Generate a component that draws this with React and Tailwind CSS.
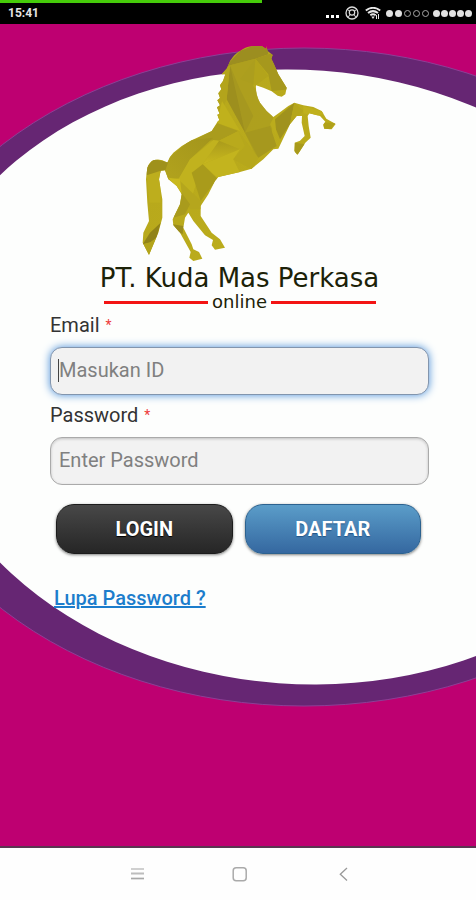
import React from "react";

function Backdrop() {
  return (
    <svg
      className="absolute inset-0 h-full w-full"
      viewBox="0 0 476 822"
      preserveAspectRatio="none"
      aria-hidden="true"
    >
      <ellipse cx="304" cy="353" rx="426" ry="329" fill="#662673" stroke="#8d3f96" strokeWidth="1" />
      <ellipse cx="301" cy="353" rx="388" ry="307" fill="#fdfefd" transform="rotate(4.2 301 353)" />
    </svg>
  );
}

const HORSE =
  "M408 30L413 45L428 57L424 68L432 85L445 115L470 155L466 175L455 182L443 179L425 166L400 155L378 148Q376 175 390 200Q408 226 430 243L455 225L475 210L493 200L520 208L550 213L575 225L589 248L617 264L605 280L583 278L579 266L586 257L570 240L538 232L533 240L536 270L542 305L526 320L510 345L502 357L493 345L494 320L510 314L524 300L515 260L516 240L500 240L480 265L445 338L430 340L400 370L365 398L330 408L265 423L255 435L235 475L212 510L212 540L245 590L270 610L285 635L255 641L245 628L249 612L225 598L190 555L175 530L165 545L160 575L185 625L190 640L207 648L217 668L190 675L178 665L182 648L175 635L150 590L130 568L128 550L150 505L155 475L140 450L115 430L105 403L92 404L87 430L97 490L97 545L85 590L57 657L38 620L40 590L57 555L52 500L48 430L52 395Q58 378 70 373Q90 366 112 380Q118 362 130 350Q155 328 185 313L245 285L262 258L268 252L262 236L269 234L261 214L270 208L262 193L270 186L265 172L274 160L270 148L279 135L286 115L275 115L291 97L300 75Q315 52 330 45Q345 33 365 31L395 30L409 39Z";

function Horse() {
  return (
    <svg className="h-[230px] w-[220px]" viewBox="0 0 660 690" role="img" aria-label="PT. Kuda Mas Perkasa">
      <defs>
        <clipPath id="horse">
          <path d={HORSE} />
        </clipPath>
        <linearGradient id="gold" x1="0" y1="0" x2="1" y2="1">
          <stop offset="0" stopColor="#b5a61c" />
          <stop offset="1" stopColor="#bdae1b" />
        </linearGradient>
        <linearGradient id="flank" x1="0" y1="1" x2="1" y2="0">
          <stop offset="0" stopColor="#b2a31d" />
          <stop offset="1" stopColor="#a3951c" />
        </linearGradient>
        <linearGradient id="belly" x1="0" y1="0" x2="0" y2="1">
          <stop offset="0" stopColor="#aa9b1b" />
          <stop offset="1" stopColor="#c8b81e" />
        </linearGradient>
      </defs>
      <path d={HORSE} fill="url(#gold)" />
      <g clipPath="url(#horse)">
        <path d="M260 120L330 45L380 25L410 25L415 55L376 68L300 88Z" fill="#9c8e20" />
        <path d="M376 68L430 50L480 160L425 165L415 115Z" fill="#a6981d" />
        <path d="M376 68L415 120L378 148L330 130Z" fill="#b3a41b" />
        <path d="M300 88L290 190L345 290L370 240L330 160Z" fill="#9d8f1e" />
        <path d="M300 88L260 110V260L290 190Z" fill="#b3a41b" />
        <path d="M276 195L260 260L330 285Z" fill="#c0b11c" />
        <path d="M300 88L345 290L380 365L420 330L430 245L370 150L376 68Z" fill="#a99b20" fillOpacity=".7" />
        <path d="M262 262L325 285L267 314L215 312L180 318L245 285Z" fill="#aa9c1d" />
        <path d="M325 285L345 330L330 340L267 314Z" fill="#b9aa1c" />
        <path d="M267 314L330 340L218 385Z" fill="url(#belly)" />
        <path d="M330 340L218 385L262 425L330 410L310 370Z" fill="#c3b41e" />
        <path d="M325 285L385 365L365 400L310 370L345 330Z" fill="#b6a71c" />
        <path d="M345 290L385 365L440 330L420 270Z" fill="#a6981e" />
        <path d="M420 265L432 243L440 262L438 300Z" fill="#bbac1c" />
        <path d="M435 250L493 200L480 265L450 310L438 280Z" fill="#a0921d" />
        <path d="M493 200L520 225L500 245L480 265Z" fill="#b5a61c" />
        <path d="M520 210L590 230L560 240L520 232Z" fill="#c0b11d" />
        <path d="M583 260H617L600 282H580Z" fill="#b0a119" />
        <path d="M495 320L525 325L510 357L493 350Z" fill="#a89a1b" />
        <path d="M105 375L180 312L250 305L180 370L150 425L105 432Z" fill="url(#flank)" />
        <path d="M250 312L267 314L218 385L180 500L145 430L180 370Z" fill="#c1b21e" />
        <path d="M218 385L262 428L212 495L185 410Z" fill="#a99b1b" />
        <path d="M145 430L212 495L212 520L180 520L150 460Z" fill="#b5a61d" />
        <path d="M115 425L150 430L155 470Z" fill="#c9b91e" />
        <path d="M155 470L180 505L165 535L130 545Z" fill="#a99b1d" />
        <path d="M128 565L160 570L158 595L145 588Z" fill="#9a8c1c" />
        <path d="M45 400L70 370L115 378L105 405L80 418L50 418Z" fill="#9f911b" />
        <path d="M50 418L90 405L92 500L58 500Z" fill="#bdae1d" />
        <path d="M38 625L60 590L92 560L80 605L60 620Z" fill="#918318" />
        <path d="M38 625L62 618L80 605L57 660Z" fill="#b3a41b" />
      </g>
    </svg>
  );
}

function Dot({ hollow = false }) {
  return (
    <span className={hollow ? "size-[7px] rounded-full border border-[#a8a8a8]" : "size-[7px] rounded-full bg-[#e2e2e2]"} />
  );
}

function StatusBar() {
  return (
    <header className="h-6 shrink-0 bg-black text-[#e5e5e5]">
      <div className="h-[3px] w-[55%] bg-[#46cc0a]" />
      <div className="flex h-5 items-center justify-between pr-1 pl-2">
        <span className="text-xs font-bold">15:41</span>
        <div className="flex items-center">
          <div className="mt-[6px] flex gap-[2px]">
            <span className="size-[3px] bg-white" />
            <span className="size-[3px] bg-white" />
            <span className="size-[3px] bg-white" />
          </div>
          <svg className="ml-[6px] size-[14px]" viewBox="0 0 14 14" fill="none" stroke="#dcdcdc" aria-hidden="true">
            <circle cx="7" cy="7" r="6" strokeWidth="1.3" />
            <circle cx="7" cy="6.5" r="2.7" strokeWidth="1.2" />
            <path d="M5 8.5L3 11.5M9 8.5L11 11.5M4.5 5L2.5 3.5M9.5 5L11.5 3.5" />
          </svg>
          <svg className="ml-[6px] h-[13px] w-4" viewBox="0 0 16 13" fill="none" stroke="#e6e6e6" aria-hidden="true">
            <path d="M.8 3.5Q8-1.8 15.2 3.5M3 6Q8 2.2 13 6M5.3 8.3Q8 6.3 10.7 8.3" strokeWidth="2" />
            <path d="M6.3 9.5H9.7L8 12Z" fill="#e6e6e6" stroke="none" />
            <path d="M11.5 8V12M13.5 7V12" strokeWidth="1" />
          </svg>
          <div className="ml-[5px] flex gap-[2px]">
            <Dot />
            <Dot />
            <Dot hollow />
            <Dot hollow />
            <Dot hollow />
          </div>
          <div className="ml-1 flex gap-[1px]">
            <Dot />
            <Dot />
            <Dot />
            <Dot />
            <Dot />
          </div>
        </div>
      </div>
    </header>
  );
}

function Brand() {
  return (
    <div className="flex flex-col items-center font-['DejaVu_Sans',sans-serif] text-[#1c2208]">
      <Horse />
      <h1 className="-mt-1 text-[26px] leading-8 whitespace-nowrap">PT. Kuda Mas Perkasa</h1>
      <div className="flex w-[272px] items-center gap-1">
        <span className="h-[3px] flex-1 bg-[#f31414]" />
        <span className="text-lg leading-4">online</span>
        <span className="h-[3px] flex-1 bg-[#f31414]" />
      </div>
    </div>
  );
}

function Field({ id, label, type, placeholder, focused }) {
  return (
    <div>
      <label htmlFor={id} className="flex h-[22px] items-center gap-[6px] text-xl text-[#333]">
        {label}
        <span className="text-sm text-[#ee3a3a]">*</span>
      </label>
      <div className="relative mt-[11px]">
        <input
          id={id}
          type={type}
          placeholder={placeholder}
          autoFocus={focused}
          className={
            focused
              ? "block h-12 w-full rounded-xl border border-[#8295ad] bg-[#f2f2f2] px-2 pb-[2px] text-xl text-[#333] caret-transparent shadow-[0_0_9px_#4a8fd8] outline-none placeholder:text-[#808080]"
              : "block h-12 w-full rounded-xl border border-[#aaa] bg-[#f2f2f2] px-2 pb-[2px] text-xl text-[#333] shadow-[inset_0_1px_3px_rgba(0,0,0,0.2)] outline-none placeholder:text-[#808080]"
          }
        />
        {focused && <span className="absolute top-3 left-2 h-[23px] w-px bg-[#444]" />}
      </div>
    </div>
  );
}

function LoginForm() {
  return (
    <form className="mt-1" onSubmit={(e) => e.preventDefault()}>
      <div className="flex flex-col gap-[9px]">
        <Field id="email" label="Email" type="text" placeholder="Masukan ID" focused />
        <Field id="password" label="Password" type="password" placeholder="Enter Password" />
      </div>
      <div className="mt-[19px] flex gap-3 pr-2 pl-[6px]">
        <button
          type="submit"
          className="h-[50px] flex-1 rounded-[18px] border border-[#1c1c1c] bg-linear-to-b from-[#484848] to-[#262626] text-xl font-bold text-white shadow-[0_1px_3px_rgba(0,0,0,0.5)] [text-shadow:0_1px_1px_#000]"
        >
          LOGIN
        </button>
        <button
          type="button"
          className="h-[50px] flex-1 rounded-[18px] border border-[#2c628f] bg-linear-to-b from-[#5b9dc9] to-[#3568a0] text-xl font-bold text-white shadow-[0_1px_3px_rgba(0,0,0,0.5)] [text-shadow:0_1px_1px_#225588]"
        >
          DAFTAR
        </button>
      </div>
      <a href="#lupa" className="mt-8 ml-1 inline-block text-xl leading-6 font-medium text-[#1c7dcc] underline">
        Lupa Password ?
      </a>
    </form>
  );
}

function NavBar() {
  return (
    <nav className="flex h-[54px] shrink-0 items-center justify-center gap-[83px] border-t-2 border-[#5a3550] bg-[#fefefe] pl-[3px]">
      <button type="button" aria-label="Menu" className="size-5">
        <svg viewBox="0 0 20 20" fill="none" aria-hidden="true">
          <path d="M4 5H17" stroke="#d0d0d0" strokeWidth="2" />
          <path d="M4 9.5H17" stroke="#bdbdbd" strokeWidth="2" />
          <path d="M4 14.5H17" stroke="#a8a8a8" strokeWidth="1.7" />
        </svg>
      </button>
      <button type="button" aria-label="Home" className="size-5">
        <svg viewBox="0 0 20 20" fill="none" stroke="#aaa" strokeWidth="1.5" aria-hidden="true">
          <rect x="3.2" y="3.7" width="13" height="13" rx="3" />
        </svg>
      </button>
      <button type="button" aria-label="Back" className="size-5">
        <svg viewBox="0 0 20 20" fill="none" stroke="#999" strokeWidth="1.3" aria-hidden="true">
          <path d="M14 4L7.3 10.2L14 16.5" />
        </svg>
      </button>
    </nav>
  );
}

export default function App() {
  return (
    <div className="flex min-h-screen flex-col font-[Roboto,sans-serif]">
      <StatusBar />
      <main className="relative flex-1 overflow-hidden bg-[#be0071]">
        <Backdrop />
        <div className="relative pt-3 pr-[47px] pl-[50px]">
          <Brand />
          <LoginForm />
        </div>
      </main>
      <NavBar />
    </div>
  );
}
